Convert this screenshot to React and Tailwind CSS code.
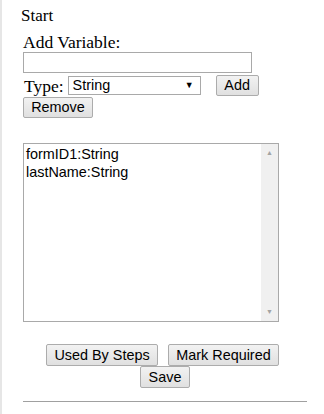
import React from 'react';

const btn =
  'h-[21px] px-[7px] border border-[#acacac] rounded-[2px] bg-gradient-to-b from-[#f2f2f2] to-[#e0e0e0] text-[14.4px] leading-[19px] text-black font-["Liberation_Sans",Arial,sans-serif]';

export default function App() {
  return (
    <div className="w-[324px] h-[414px] bg-white border-l-2 border-[#e6e6e6] font-['Liberation_Serif','Times_New_Roman',serif] text-black">
      <div className="pt-[6px] pl-[19px] text-[17px] leading-[20px]">Start</div>
      <div className="pl-[21px]">
        <div className="mt-[6px] text-[17.5px] leading-[20px]">Add Variable:</div>
        <div className="h-[21px] w-[229px] border border-[#a9a9a9] bg-white" />
        <div className="mt-[2px] flex items-center h-[21px]">
          <span className="text-[17.5px] leading-[20px] pl-px">Type:</span>
          <div className="ml-[4px] h-[19px] w-[133px] border border-[#a9a9a9] bg-white flex items-center justify-between pl-[4px] pr-[6px] font-['Liberation_Sans',Arial,sans-serif] text-[14.4px] leading-[17px]">
            <span>String</span>
            <span className="text-[9px]">▼</span>
          </div>
          <button className={`${btn} ml-[15px] w-[43px] px-0`}>Add</button>
        </div>
        <button className={`${btn} mt-px w-[70px] px-0 block`}>Remove</button>
        <div className="mt-[25px] h-[179px] w-[256px] border border-[#a9a9a9] flex">
          <div className="flex-1 pl-[2px] pt-[2px] font-['Liberation_Sans',Arial,sans-serif] text-[14.4px] leading-[17.5px]">
            <div>formID1:String</div>
            <div>lastName:String</div>
          </div>
          <div className="w-[17px] bg-[#f0f0f0] flex flex-col justify-between items-center py-[5px] text-[7px] text-[#a3a3a3] leading-[8px]">
            <span>▲</span>
            <span>▼</span>
          </div>
        </div>
        <div className="mt-[22px] flex flex-col">
          <div className="flex gap-[10px] ml-[23px]">
            <button className={`${btn} h-[22px] w-[112px] px-0`}>Used By Steps</button>
            <button className={`${btn} h-[22px] w-[111px] px-0`}>Mark Required</button>
          </div>
          <button className={`${btn} h-[22px] w-[50px] px-0 ml-[117px]`}>Save</button>
        </div>
        <div className="mt-[13px] w-[284px] border-t border-[#a0a0a0]" />
      </div>
    </div>
  );
}
